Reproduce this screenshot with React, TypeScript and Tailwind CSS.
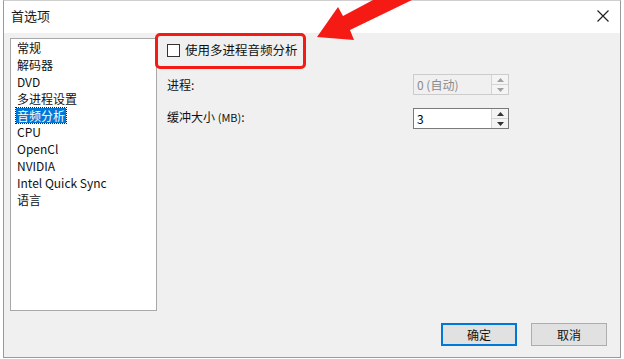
import React from "react"

const font = { fontFamily: '"Noto Sans CJK SC", "Liberation Sans", sans-serif' }

const items = [
  "常规",
  "解码器",
  "DVD",
  "多进程设置",
  "音频分析",
  "CPU",
  "OpenCl",
  "NVIDIA",
  "Intel Quick Sync",
  "语言",
]

const Spinner = ({ value, disabled }: { value: string; disabled?: boolean }) => {
  return (
    <div
      className={
        "flex w-[96px] h-[21px] border " +
        (disabled ? "border-[#cccccc] bg-[#f0f0f0]" : "border-[#7a7a7a] bg-white")
      }
    >
      <div
        className={
          "flex-1 flex items-center pl-[3px] text-[12px] " +
          (disabled ? "text-[#8a8a8a]" : "text-black")
        }
      >
        {value}
      </div>
      <div className="w-[17px] flex flex-col border-l border-[#d4d4d4]">
        <div className="flex-1 flex items-center justify-center border-b border-[#d4d4d4] bg-[#f4f4f4]">
          <svg width="7" height="4" viewBox="0 0 7 4">
            <path d="M0 4 L3.5 0 L7 4 Z" fill={disabled ? "#a0a0a0" : "#333"} />
          </svg>
        </div>
        <div className="flex-1 flex items-center justify-center bg-[#f4f4f4]">
          <svg width="7" height="4" viewBox="0 0 7 4">
            <path d="M0 0 L3.5 4 L7 0 Z" fill={disabled ? "#a0a0a0" : "#333"} />
          </svg>
        </div>
      </div>
    </div>
  )
}

const App = () => {
  return (
    <div className="relative w-[624px] h-[359px] bg-white overflow-hidden" style={font}>
      <div className="ml-[3px] w-[618px] h-[358px] flex flex-col border-l border-r border-b border-[#9a9a9a] border-t border-t-[#cfcfcf]">
        {/* title bar */}
        <div className="h-[32px] bg-white flex items-center justify-between pl-[7px] pr-[11px] pb-[2px]">
          <span className="text-[13px] text-[#1a1a1a]">首选项</span>
          <svg width="12" height="12" viewBox="0 0 12 12">
            <path d="M0.5 0.5 L11.5 11.5 M11.5 0.5 L0.5 11.5" stroke="#222" strokeWidth="1.2" />
          </svg>
        </div>

        {/* body */}
        <div className="flex-1 bg-[#f0f0f0] flex flex-col">
          <div className="flex pt-[5px]">
            <div className="ml-[6px] w-[147px] h-[273px] bg-white border border-[#a8a8a8] pt-[0px] pl-[5px]">
              {items.map((it) => (
                <div key={it} className="h-[16.9px] flex items-center">
                  <span
                    className={
                      "text-[12px] leading-[15px] px-[1px] " +
                      (it === "音频分析"
                        ? "bg-[#0078d7] text-white outline outline-1 outline-dotted outline-[#222]"
                        : "text-[#111]")
                    }
                  >
                    {it}
                  </span>
                </div>
              ))}
            </div>

            <div className="ml-[10px] flex flex-col pt-[5px]">
              <div className="flex items-center gap-[5px] h-[14px]">
                <div className="w-[13px] h-[13px] border border-[#333] bg-white" />
                <span className="text-[12.5px] text-[#111]">使用多进程音频分析</span>
              </div>
              <div className="flex items-center mt-[17px]">
                <span className="w-[246px] text-[12px] text-[#111]">进程:</span>
                <Spinner value="0 (自动)" disabled />
              </div>
              <div className="flex items-center mt-[13px]">
                <span className="w-[246px] text-[12px] text-[#111] pb-[3px]">
                  缓冲大小 <span className="text-[11px]">(MB)</span>:
                </span>
                <Spinner value="3" />
              </div>
            </div>
          </div>

          <div className="flex justify-end gap-[14px] pr-[13px] mt-[12px]">
            <button className="w-[76px] h-[23px] bg-[#e1e1e1] border-2 border-[#0078d7] text-[12px] text-[#111]">
              确定
            </button>
            <button className="w-[76px] h-[23px] bg-[#e1e1e1] border border-[#adadad] text-[12px] text-[#111]">
              取消
            </button>
          </div>
        </div>
      </div>

      {/* annotation: red box */}
      <div className="absolute left-[155px] top-[33px] w-[151px] h-[36px] border-[3px] border-[#f51a14] rounded-[5px]" />

      {/* annotation: arrow */}
      <svg className="absolute left-0 top-0" width="624" height="60" viewBox="0 0 624 60">
        <path
          d="M317 37 L338 7 L343 16 L373 0 L412 0 L350 30 L354 40 Z"
          fill="#f51a14"
        />
      </svg>
    </div>
  )
}

export default App
